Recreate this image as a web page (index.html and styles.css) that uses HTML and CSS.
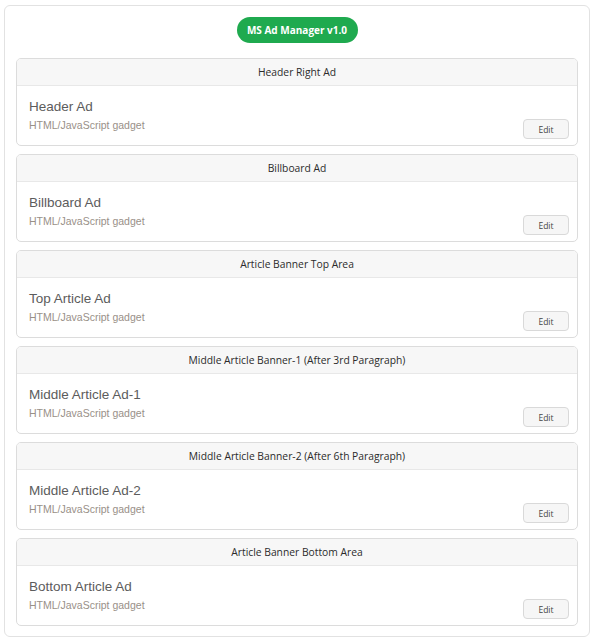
FILE: index.html
```html
<!DOCTYPE html>
<html>
<head>
<meta charset="utf-8">
<link rel="stylesheet" href="styles.css">
</head>
<body>
<div class="panel">
  <div class="brand"><span class="pill">MS Ad Manager v1.0</span></div>
  <div class="cards">
    <div class="card">
      <div class="card-head">Header Right Ad</div>
      <div class="card-body">
        <div class="info"><div class="title">Header Ad</div><div class="sub">HTML/JavaScript gadget</div></div>
        <button class="edit">Edit</button>
      </div>
    </div>
    <div class="card">
      <div class="card-head">Billboard Ad</div>
      <div class="card-body">
        <div class="info"><div class="title">Billboard Ad</div><div class="sub">HTML/JavaScript gadget</div></div>
        <button class="edit">Edit</button>
      </div>
    </div>
    <div class="card">
      <div class="card-head">Article Banner Top Area</div>
      <div class="card-body">
        <div class="info"><div class="title">Top Article Ad</div><div class="sub">HTML/JavaScript gadget</div></div>
        <button class="edit">Edit</button>
      </div>
    </div>
    <div class="card">
      <div class="card-head">Middle Article Banner-1 (After 3rd Paragraph)</div>
      <div class="card-body">
        <div class="info"><div class="title">Middle Article Ad-1</div><div class="sub">HTML/JavaScript gadget</div></div>
        <button class="edit">Edit</button>
      </div>
    </div>
    <div class="card">
      <div class="card-head">Middle Article Banner-2 (After 6th Paragraph)</div>
      <div class="card-body">
        <div class="info"><div class="title">Middle Article Ad-2</div><div class="sub">HTML/JavaScript gadget</div></div>
        <button class="edit">Edit</button>
      </div>
    </div>
    <div class="card">
      <div class="card-head">Article Banner Bottom Area</div>
      <div class="card-body">
        <div class="info"><div class="title">Bottom Article Ad</div><div class="sub">HTML/JavaScript gadget</div></div>
        <button class="edit">Edit</button>
      </div>
    </div>
  </div>
</div>
</body>
</html>
```
FILE: styles.css
```css
html, body { margin: 0; padding: 0; background: #fff; }
body { font-family: "Open Sans", "Noto Sans", sans-serif; }
.panel {
  margin: 5px 0 0 4px;
  width: 586px;
  box-sizing: border-box;
  border: 1px solid #e2e2e2;
  border-radius: 6px;
  padding: 11px 11px 10px 11px;
}
.brand { display: flex; justify-content: center; margin-bottom: 15px; }
.pill {
  display: inline-flex; align-items: center; justify-content: center;
  width: 121px; height: 26px;
  background: #1faa4f; color: #fff;
  border-radius: 13px;
  font-weight: 700; font-size: 10px;
}
.cards { display: flex; flex-direction: column; gap: 8px; }
.card {
  border: 1px solid #dcdcdc;
  border-radius: 5px;
  height: 88px; box-sizing: border-box;
  overflow: hidden;
}
.card-head {
  height: 27px; box-sizing: border-box;
  background: #f7f7f7;
  border-bottom: 1px solid #e8e8e8;
  display: flex; align-items: center; justify-content: center;
  font-size: 10.3px; color: #2b2b2b;
}
.card-body {
  height: 59px; box-sizing: border-box;
  display: flex; justify-content: space-between; align-items: flex-end;
  padding: 12px 8px 6px 12px;
}
.info { align-self: flex-start; font-family: "Liberation Sans", Arial, sans-serif; }
.title { font-size: 13.5px; line-height: 17px; color: #5c5c5c; }
.sub { font-size: 10.5px; line-height: 14px; color: #999088; margin-top: 3px; }
.edit {
  width: 46px; height: 20px;
  border: 1px solid #d9d9d9; border-radius: 4px;
  background: #f6f6f6;
  font-family: "Open Sans", sans-serif; font-size: 8.5px; color: #444;
  padding: 0; margin: 0;
}
```
